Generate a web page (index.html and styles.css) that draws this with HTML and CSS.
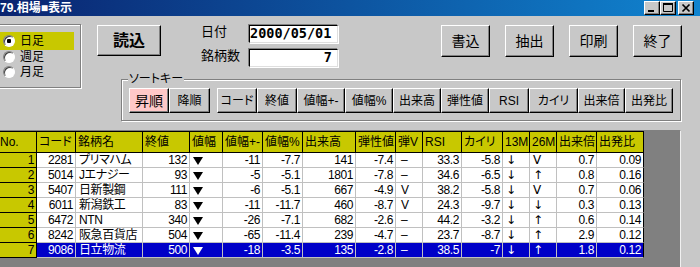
FILE: index.html
```html
<!DOCTYPE html>
<html lang="ja">
<head>
    <meta charset="UTF-8">
    <meta name="viewport" content="width=device-width, initial-scale=1.0">
    <title>79.相場表示</title>
    <link rel="stylesheet" href="styles.css">
</head>
<body>

    <div class="titlebar">
        <span class="title">79.相場■表示</span>
        <div class="winbtns">
            <span class="wbtn"><svg width="14" height="12" viewBox="0 0 14 12"><rect x="3" y="8" width="6" height="2"/></svg></span>
            <span class="wbtn"><svg width="14" height="12" viewBox="0 0 14 12"><path d="M2.5 1.5h9v8h-9z" fill="none" stroke="#000"/><rect x="2" y="1" width="10" height="2"/></svg></span>
            <span class="wbtn close"><svg width="14" height="12" viewBox="0 0 14 12"><path d="M3.5 2.5l7 7M10.5 2.5l-7 7" stroke="#000" stroke-width="1.7"/></svg></span>
        </div>
    </div>

    <div class="head">
        <div class="modes">
            <div class="mode on"><span class="radio checked"></span>日足</div>
            <div class="mode second"><span class="radio"></span>週足</div>
            <div class="mode third"><span class="radio"></span>月足</div>
        </div>

        <div class="side">
            <div class="controls">
                <button class="btn load">読込</button>
                <div class="labels">
                    <span>日付</span>
                    <span>銘柄数</span>
                </div>
                <div class="fields">
                    <div class="field">2000/05/01</div>
                    <div class="field count">7</div>
                </div>
                <div class="actions">
                    <button class="btn act">書込</button>
                    <button class="btn act">抽出</button>
                    <button class="btn act">印刷</button>
                    <button class="btn act">終了</button>
                </div>
            </div>

            <div class="sortkey">
                <span class="legend">ソートキー</span>
                <div class="sortrow">
                    <div class="order">
                        <button class="btn sbtn asc">昇順</button>
                        <button class="btn sbtn w41">降順</button>
                    </div>
                    <div class="keys">
                        <button class="btn sbtn">コード</button>
                        <button class="btn sbtn">終値</button>
                        <button class="btn sbtn w48">値幅+-</button>
                        <button class="btn sbtn w48">値幅%</button>
                        <button class="btn sbtn w48">出来高</button>
                        <button class="btn sbtn w48">弾性値</button>
                        <button class="btn sbtn">RSI</button>
                        <button class="btn sbtn w49">カイリ</button>
                        <button class="btn sbtn w47">出来倍</button>
                        <button class="btn sbtn w48">出発比</button>
                    </div>
                </div>
            </div>
        </div>
    </div>

    <div class="grid">
        <div class="table">
            <div class="row hrow">
                <div class="c">No.</div><div class="c">コード</div><div class="c">銘柄名</div><div class="c">終値</div><div class="c">値幅</div><div class="c">値幅+-</div><div class="c">値幅%</div><div class="c">出来高</div><div class="c">弾性値</div><div class="c">弾V</div><div class="c">RSI</div><div class="c">カイリ</div><div class="c">13M</div><div class="c">26M</div><div class="c">出来倍</div><div class="c last">出発比</div>
            </div>
            <div class="row">
                <div class="c no">1</div><div class="c r">2281</div><div class="c nm">プリマハム</div><div class="c r">132</div><div class="c tc"><i class="tri"></i></div><div class="c r">-11</div><div class="c r">-7.7</div><div class="c r">141</div><div class="c r">-7.4</div><div class="c sg">–</div><div class="c r">33.3</div><div class="c r">-5.8</div><div class="c ar">↓</div><div class="c ar2">V</div><div class="c r">0.7</div><div class="c r last">0.09</div>
            </div>
            <div class="row">
                <div class="c no">2</div><div class="c r">5014</div><div class="c nm">Jエナジー</div><div class="c r">93</div><div class="c tc"><i class="tri"></i></div><div class="c r">-5</div><div class="c r">-5.1</div><div class="c r">1801</div><div class="c r">-7.8</div><div class="c sg">–</div><div class="c r">34.6</div><div class="c r">-6.5</div><div class="c ar">↓</div><div class="c ar2">↑</div><div class="c r">0.8</div><div class="c r last">0.16</div>
            </div>
            <div class="row">
                <div class="c no">3</div><div class="c r">5407</div><div class="c nm">日新製鋼</div><div class="c r">111</div><div class="c tc"><i class="tri"></i></div><div class="c r">-6</div><div class="c r">-5.1</div><div class="c r">667</div><div class="c r">-4.9</div><div class="c sg">V</div><div class="c r">38.2</div><div class="c r">-5.8</div><div class="c ar">↓</div><div class="c ar2">V</div><div class="c r">0.7</div><div class="c r last">0.06</div>
            </div>
            <div class="row">
                <div class="c no">4</div><div class="c r">6011</div><div class="c nm">新潟鉄工</div><div class="c r">83</div><div class="c tc"><i class="tri"></i></div><div class="c r">-11</div><div class="c r">-11.7</div><div class="c r">460</div><div class="c r">-8.7</div><div class="c sg">V</div><div class="c r">24.3</div><div class="c r">-9.7</div><div class="c ar">↓</div><div class="c ar2">↓</div><div class="c r">0.3</div><div class="c r last">0.13</div>
            </div>
            <div class="row">
                <div class="c no">5</div><div class="c r">6472</div><div class="c nm">NTN</div><div class="c r">340</div><div class="c tc"><i class="tri"></i></div><div class="c r">-26</div><div class="c r">-7.1</div><div class="c r">682</div><div class="c r">-2.6</div><div class="c sg">–</div><div class="c r">44.2</div><div class="c r">-3.2</div><div class="c ar">↓</div><div class="c ar2">↑</div><div class="c r">0.6</div><div class="c r last">0.14</div>
            </div>
            <div class="row">
                <div class="c no">6</div><div class="c r">8242</div><div class="c nm">阪急百貨店</div><div class="c r">504</div><div class="c tc"><i class="tri"></i></div><div class="c r">-65</div><div class="c r">-11.4</div><div class="c r">239</div><div class="c r">-4.7</div><div class="c sg">–</div><div class="c r">23.7</div><div class="c r">-8.7</div><div class="c ar">↓</div><div class="c ar2">↑</div><div class="c r">2.9</div><div class="c r last">0.12</div>
            </div>
            <div class="row sel">
                <div class="c no">7</div><div class="c r">9086</div><div class="c nm">日立物流</div><div class="c r">500</div><div class="c tc"><i class="tri"></i></div><div class="c r">-18</div><div class="c r">-3.5</div><div class="c r">135</div><div class="c r">-2.8</div><div class="c sg">–</div><div class="c r">38.5</div><div class="c r">-7</div><div class="c ar">↓</div><div class="c ar2">↑</div><div class="c r">1.8</div><div class="c r last">0.12</div>
            </div>
        </div>
    </div>

</body>
</html>
```

FILE: styles.css
```css
body {
    margin: 0;
    background: #c8c8c8;
    font-family: "Liberation Sans", "Noto Sans CJK JP", sans-serif;
    font-size: 12px;
    color: #000;
    overflow: hidden;
    font-feature-settings: "palt";
}

/* タイトルバー */
.titlebar {
    height: 16px;
    display: flex;
    align-items: center;
    justify-content: space-between;
    padding-right: 6px;
    background: linear-gradient(to right, #0a2470, #1084d0);
}

.title {
    color: #fff;
    font-weight: bold;
    font-size: 12px;
    line-height: 16px;
}

.winbtns {
    display: flex;
}

.wbtn {
    width: 16px;
    height: 14px;
    box-sizing: border-box;
    background: #c8c8c8;
    border: 1px solid;
    border-color: #fff #000 #000 #fff;
    box-shadow: inset -1px -1px 0 #808080;
    display: flex;
    align-items: center;
    justify-content: center;
}

.wbtn.close {
    margin-left: 2px;
}

/* 上部 */
.head {
    display: flex;
    height: 114px;
}

.modes {
    margin-left: -2px;
    margin-top: 8px;
    width: 83px;
    height: 64px;
    box-sizing: border-box;
    border: 1px solid #808080;
    box-shadow: inset 1px 1px 0 #fff, 1px 1px 0 #fff;
    padding: 7px 0 0 1px;
    display: flex;
    flex-direction: column;
}

.mode {
    width: 74px;
    height: 18px;
    display: flex;
    align-items: center;
    gap: 5px;
    padding-left: 3px;
    box-sizing: border-box;
    line-height: 14px;
}

.mode.on {
    background: #c8c800;
}

.mode.second {
    height: 13px;
}

.mode.third {
    height: 17px;
}

.radio {
    width: 12px;
    height: 12px;
    box-sizing: border-box;
    border-radius: 50%;
    background: #fff;
    border: 1px solid;
    border-color: #808080 #fff #fff #808080;
    box-shadow: inset 1px 1px 0 #404040;
}

.radio.checked {
    background: radial-gradient(circle, #000 2px, #fff 2.5px);
}

.side {
    display: flex;
    flex-direction: column;
}

.controls {
    display: flex;
    align-items: flex-start;
    height: 63px;
    box-sizing: border-box;
    padding: 9px 0 0 16px;
}

.btn {
    background: #c8c8c8;
    border: 1px solid;
    border-color: #fff #000 #000 #fff;
    box-shadow: inset -1px -1px 0 #808080;
    padding: 0;
    margin: 0;
    box-sizing: border-box;
    font-family: inherit;
    font-feature-settings: "palt";
    color: #000;
    line-height: 1;
}

.load {
    width: 64px;
    height: 31px;
    font-size: 16px;
    font-weight: bold;
}

.labels {
    margin-left: 40px;
    width: 48px;
    display: flex;
    flex-direction: column;
    gap: 11px;
    font-size: 13px;
    line-height: 13px;
}

.fields {
    display: flex;
    flex-direction: column;
    gap: 6px;
}

.field {
    width: 89px;
    height: 18px;
    box-sizing: border-box;
    background: #fff;
    border: 1px solid;
    border-color: #000 #dfdfdf #dfdfdf #000;
    box-shadow: -1px -1px 0 #808080, 1px 1px 0 #fff;
    font-family: "DejaVu Sans Mono", monospace;
    font-weight: bold;
    font-size: 13.5px;
    line-height: 15px;
    padding-left: 0;
}

.field.count {
    text-align: right;
    padding-right: 5px;
}

.actions {
    margin-left: 103px;
    display: flex;
    gap: 15px;
}

.act {
    width: 49px;
    height: 32px;
    font-size: 14px;
}

/* ソートキー */
.sortkey {
    margin-left: 40px;
    width: 560px;
    height: 42px;
    box-sizing: border-box;
    border: 1px solid #808080;
    box-shadow: inset 1px 1px 0 #fff, 1px 1px 0 #fff;
    padding-left: 7px;
    display: flex;
    flex-direction: column;
    align-items: flex-start;
}

.legend {
    margin-top: -8px;
    margin-left: -1px;
    padding: 0 1px;
    height: 14px;
    line-height: 14px;
    background: #c8c8c8;
}

.sortrow {
    display: flex;
    margin-top: 2px;
}

.order,
.keys {
    display: flex;
}

.keys {
    margin-left: 7px;
}

.sbtn {
    width: 40px;
    height: 25px;
    font-size: 12px;
}

.sbtn.asc {
    background: #ffc8c8;
    font-size: 14px;
}

.w41 { width: 41px; }
.w47 { width: 47px; }
.w48 { width: 48px; }
.w49 { width: 49px; }

/* 一覧 */
.grid {
    margin-left: -2px;
    width: 683px;
    height: 137px;
    box-sizing: border-box;
    background: #808080;
    border-top: 1px solid #808080;
    border-right: 1px solid #f0f0f0;
    overflow: hidden;
}

.table {
    display: grid;
    grid-template-columns: 39px 39px 67px 47px 33px 40px 40px 53px 40px 27px 39px 41px 27px 27px 40px 47px;
    width: 646px;
    border-top: 1px solid #000;
}

.row {
    display: contents;
}

.c {
    box-sizing: border-box;
    height: 15px;
    line-height: 14px;
    background: #fff;
    border-right: 1px solid #c0c0c0;
    border-bottom: 1px solid #c0c0c0;
    padding: 0 2px 0 3px;
    white-space: nowrap;
    overflow: hidden;
    letter-spacing: -0.4px;
}

.hrow .c {
    height: 21px;
    line-height: 20px;
    background: #c8c800;
    border-color: #000;
    padding-left: 2px;
    letter-spacing: 0;
}

.c.r {
    text-align: right;
}

.c.no {
    background: #c8c800;
    border-color: #000;
    text-align: right;
}

.c.last {
    border-right-color: #000;
}

.c.sg {
    padding-left: 5px;
}

.c.ar,
.c.ar2 {
    font-family: "DejaVu Sans", sans-serif;
    font-size: 12px;
    line-height: 14px;
    letter-spacing: 0;
}

.c.ar {
    padding-left: 3px;
}

.c.ar2 {
    padding-left: 3px;
}

.tri {
    display: inline-block;
    width: 0;
    height: 0;
    margin-top: 4px;
    border-left: 5px solid transparent;
    border-right: 5px solid transparent;
    border-top: 8px solid currentColor;
    vertical-align: top;
}

.sel .c {
    background: #0000c8;
    color: #fff;
}

.sel .c.no {
    background: #c8c800;
    color: #000;
}
```
